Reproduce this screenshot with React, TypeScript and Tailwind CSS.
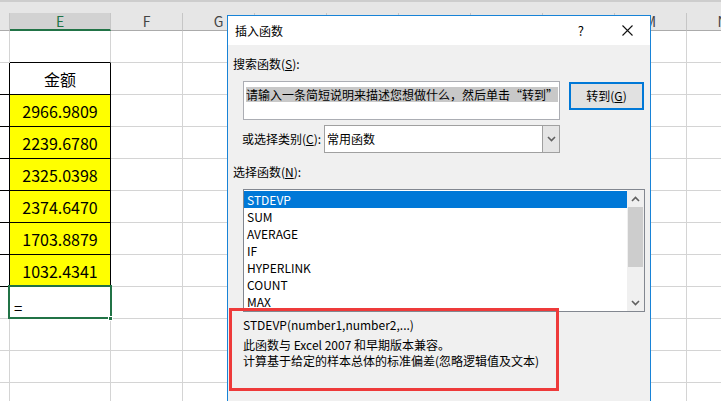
import React from 'react';

const colWidths = [10, 101, 72, 72, 72, 72, 72, 72, 72, 72, 72];
// H..L sit under the dialog, so their labels are never seen
const colNames = ['', 'E', 'F', 'G', '', '', '', '', '', 'M', 'N'];

const amounts = ['2966.9809', '2239.6780', '2325.0398', '2374.6470', '1703.8879', '1032.4341'];

const functions = ['STDEVP', 'SUM', 'AVERAGE', 'IF', 'HYPERLINK', 'COUNT', 'MAX'];

function HeaderRow() {
  return (
    <div className="flex h-[18px]">
      {colWidths.map((w, i) => (
        <div
          key={i}
          style={{ width: w }}
          className={
            i === 1
              ? 'shrink-0 flex items-center justify-center bg-[#d2d2d2] border-r border-[#c6c6c6] border-b-2 border-b-[#217346] text-[#217346] text-[14px]'
              : 'shrink-0 flex items-center justify-center bg-[#e6e6e6] border-r border-[#c6c6c6] border-b border-b-[#ababab] text-[#444] text-[14px]'
          }
        >
          {colNames[i]}
        </div>
      ))}
    </div>
  );
}

function BodyRow({ r }: { r: number }) {
  const inTable = r >= 1 && r <= 7;
  return (
    <div className="flex h-[32px]">
      {colWidths.map((w, i) => {
        if (i === 0) {
          return (
            <div
              key={i}
              style={{ width: w }}
              className={
                inTable
                  ? 'shrink-0 border-r border-b border-black'
                  : 'shrink-0 border-r border-b border-[#d4d4d4]'
              }
            />
          );
        }
        if (i === 1) {
          const bottomBlack = r >= 0 && r <= 7;
          let cls = 'shrink-0 flex items-center justify-center text-[16px] text-black ';
          cls += bottomBlack ? 'border-b border-b-black ' : 'border-b border-b-[#d4d4d4] ';
          cls += inTable ? 'border-r border-r-black ' : 'border-r border-r-[#d4d4d4] ';
          if (r >= 2 && r <= 7) cls += 'bg-[#ffff00]';
          if (r === 8) cls += 'relative';
          return (
            <div key={i} style={{ width: w }} className={cls}>
              {r === 1 && '金额'}
              {r >= 2 && r <= 7 && amounts[r - 2]}
              {r === 8 && (
                <>
                  <div className="absolute -left-[2px] -top-[2px] w-[104px] h-[34px] border-2 border-[#217346]" />
                  <div className="absolute -right-[3px] -bottom-[3px] w-[5px] h-[5px] bg-[#217346] border border-white" />
                  <span className="absolute left-[4px] top-[13px] text-[15px] leading-none">=</span>
                </>
              )}
            </div>
          );
        }
        return (
          <div
            key={i}
            style={{ width: w }}
            className="shrink-0 border-r border-b border-[#d4d4d4]"
          />
        );
      })}
    </div>
  );
}

function Chevron({ up }: { up?: boolean }) {
  return (
    <svg width="9" height="6" viewBox="0 0 9 6">
      <path
        d={up ? 'M1 5 L4.5 1.5 L8 5' : 'M1 1 L4.5 4.5 L8 1'}
        fill="none"
        stroke="#606060"
        strokeWidth="1.6"
      />
    </svg>
  );
}

function InsertFunctionDialog() {
  return (
    <div className="absolute left-[227px] top-[15px] w-[424px] h-[400px] border border-[#1883d7] bg-[#f0f0f0] text-[12px] text-black">
      {/* title bar */}
      <div className="h-[29px] bg-white flex items-center pl-[7px]">
        <span className="text-[12px]">插入函数</span>
        <span className="ml-auto mr-[38px] text-[13px]">?</span>
        <svg width="11" height="11" viewBox="0 0 11 11" className="mr-[17px]">
          <path d="M0.5 0.5 L10.5 10.5 M10.5 0.5 L0.5 10.5" stroke="#111" strokeWidth="1.1" />
        </svg>
      </div>

      <div className="pl-[5px] mt-[11px] h-[16px] leading-[16px]">
        搜索函数(<u>S</u>):
      </div>

      <div className="flex mt-[9px] pl-[15px]">
        <div className="w-[317px] h-[39px] bg-white border border-[#abadb3] pl-[2px] pt-[4px]">
          <span className="bg-[#c8c8c8] leading-[15px] inline-block">请输入一条简短说明来描述您想做什么，然后单击“转到”</span>
        </div>
        <div className="ml-[9px] mt-[1px] w-[75px] h-[28px] border-2 border-[#0078d7] bg-[#e1e1e1] flex items-center justify-center">
          转到(<u>G</u>)
        </div>
      </div>

      <div className="flex items-center mt-[5px] pl-[14px]">
        <span className="w-[82px]">或选择类别(<u>C</u>):</span>
        <div className="flex w-[236px] h-[28px] bg-white border border-[#a0a0a0]">
          <span className="pl-[2px] pt-[5px] leading-[16px]">常用函数</span>
          <div className="ml-auto w-[17px] h-full bg-[#e5e5e5] border-l border-[#a0a0a0] flex items-center justify-center">
            <Chevron />
          </div>
        </div>
      </div>

      <div className="pl-[5px] mt-[11px] h-[16px] leading-[16px]">
        选择函数(<u>N</u>):
      </div>

      <div className="flex ml-[15px] mt-[9px] w-[402px] h-[123px] bg-white border border-[#828790]">
        <div className="flex-1 pt-[1px]">
          {functions.map((f, i) => (
            <div
              key={f}
              className={
                i === 0
                  ? 'h-[17px] leading-[17px] pl-[3px] bg-[#0078d7] text-white'
                  : 'h-[17px] leading-[17px] pl-[3px]'
              }
            >
              {f}
            </div>
          ))}
        </div>
        <div className="w-[17px] bg-[#f0f0f0] flex flex-col items-center">
          <div className="h-[17px] flex items-center justify-center">
            <Chevron up />
          </div>
          <div className="w-[15px] h-[60px] bg-[#cdcdcd]" />
          <div className="mt-auto h-[17px] flex items-center justify-center">
            <Chevron />
          </div>
        </div>
      </div>

      <div className="pl-[15px] pt-[5px] leading-[16px]">
        <div>STDEVP(number1,number2,...)</div>
        <div className="mt-[4px]">此函数与 Excel 2007 和早期版本兼容。</div>
        <div>计算基于给定的样本总体的标准偏差(忽略逻辑值及文本)</div>
      </div>
    </div>
  );
}

export default function App() {
  return (
    <div className="relative w-[721px] h-[401px] overflow-hidden bg-white font-['Noto_Sans_CJK_SC','Noto_Sans',sans-serif]">
      {/* sheet */}
      <div className="h-[13px] bg-[#e6e6e6] border-t-2 border-[#cdcdcd]" />
      <HeaderRow />
      {Array.from({ length: 12 }).map((_, r) => (
        <BodyRow key={r} r={r} />
      ))}

      <InsertFunctionDialog />

      {/* red annotation box */}
      <div className="absolute left-[229px] top-[308px] w-[330px] h-[83px] border-[3px] border-[#ee3a3a]" />
    </div>
  );
}
